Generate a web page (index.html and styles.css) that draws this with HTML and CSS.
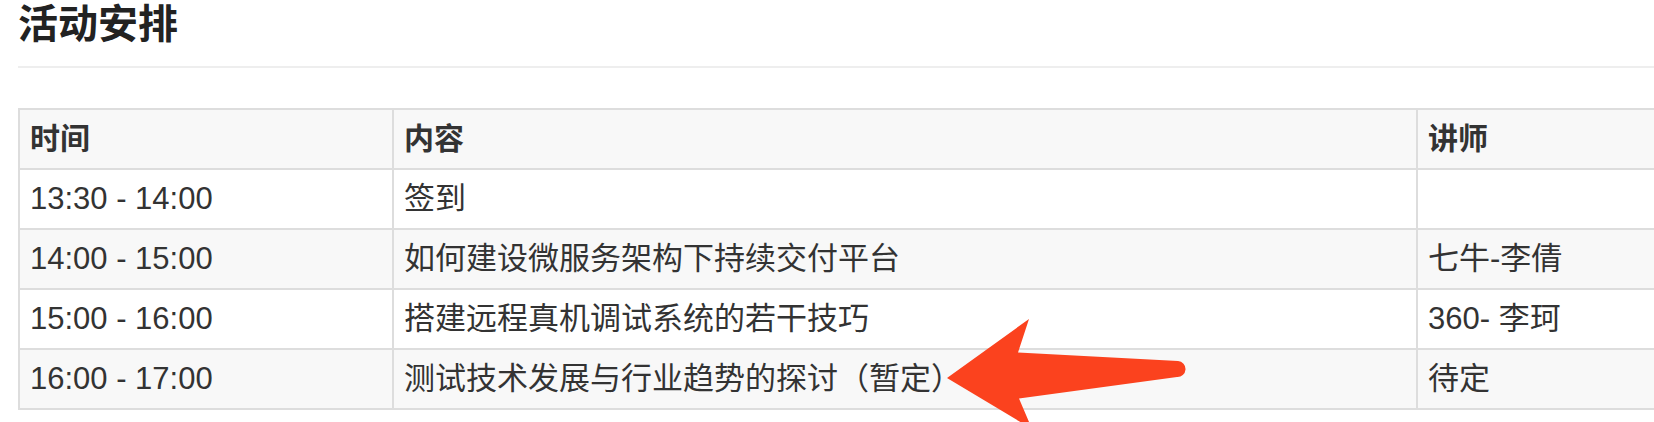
FILE: index.html
```html
<!DOCTYPE html>
<html lang="zh">
<head>
<meta charset="utf-8">
<title>活动安排</title>
<link rel="stylesheet" href="styles.css">
</head>
<body>
<div class="page">
  <h2 class="title">活动安排</h2>
  <table class="schedule">
    <thead>
      <tr>
        <th class="c-time">时间</th>
        <th class="c-topic">内容</th>
        <th class="c-speaker">讲师</th>
      </tr>
    </thead>
    <tbody>
      <tr><td>13:30 - 14:00</td><td>签到</td><td></td></tr>
      <tr class="alt"><td>14:00 - 15:00</td><td>如何建设微服务架构下持续交付平台</td><td>七牛-李倩</td></tr>
      <tr><td>15:00 - 16:00</td><td>搭建远程真机调试系统的若干技巧</td><td>360- 李珂</td></tr>
      <tr class="alt"><td>16:00 - 17:00</td><td>测试技术发展与行业趋势的探讨（暂定）</td><td>待定</td></tr>
    </tbody>
  </table>
</div>
<svg class="arrow" width="1654" height="422" viewBox="0 0 1654 422" xmlns="http://www.w3.org/2000/svg">
  <path d="M947 378 L1029 319 L1018 352.5 L1178 361 A8 8 0 0 1 1177 377 L1019 398.5 L1032 429 Z" fill="#fb421e"/>
</svg>
</body>
</html>
```

FILE: styles.css
```css
html, body {
  margin: 0;
  padding: 0;
  overflow: hidden;
  background: #fff;
}
body {
  font-family: "Liberation Sans", "Noto Sans CJK SC", sans-serif;
  color: #333;
  position: relative;
  width: 1654px;
  height: 422px;
}
.page {
  padding: 0 0 0 18px;
}
.title {
  margin: 0;
  font-size: 40px;
  line-height: 48px;
  font-weight: bold;
  color: #222;
  padding: 0 0 18px 0;
  border-bottom: 2px solid #eee;
}
.schedule {
  margin-top: 40px;
  border-collapse: separate;
  border-spacing: 0;
  table-layout: fixed;
  width: 1800px;
  border-top: 2px solid #ddd;
  border-left: 2px solid #ddd;
  font-size: 31px;
}
.schedule th,
.schedule td {
  box-sizing: border-box;
  text-align: left;
  padding: 12px 10px;
  line-height: 34px;
  height: 60px;
  border-right: 2px solid #ddd;
  border-bottom: 2px solid #ddd;
  white-space: nowrap;
}
.schedule th {
  font-weight: bold;
  font-size: 30px;
  background: #f8f8f8;
}
.c-time { width: 374px; }
.c-topic { width: 1024px; }
.c-speaker { width: 400px; }
.schedule tr.alt td {
  background: #f8f8f8;
}
.arrow {
  position: absolute;
  left: 0;
  top: 0;
  pointer-events: none;
}
```
